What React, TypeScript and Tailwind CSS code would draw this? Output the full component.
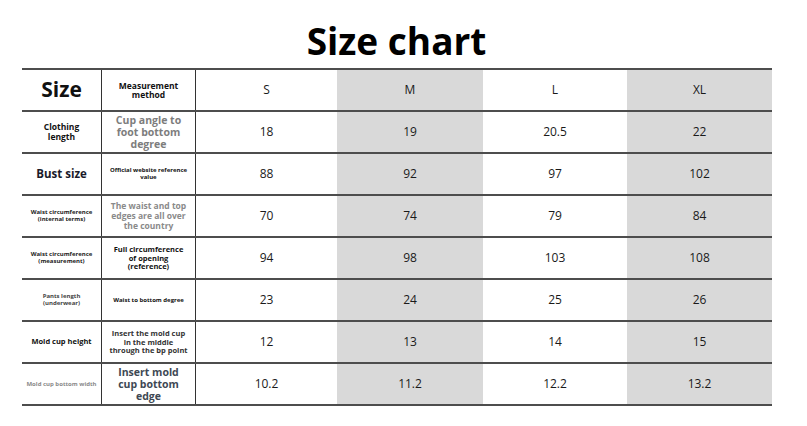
const sizes = ["S", "M", "L", "XL"];

type Row = {
  label: React.ReactNode;
  method: React.ReactNode;
  values: string[];
};

const rows: Row[] = [
  {
    label: <span className="text-[8.5px] font-bold leading-[10.5px] text-[#111]">Clothing<br />length</span>,
    method: (
      <span className="text-[10.5px] font-bold leading-[12px] text-[#7d7d7d]">
        Cup angle to<br />foot bottom<br />degree
      </span>
    ),
    values: ["18", "19", "20.5", "22"],
  },
  {
    label: <span className="text-[11.5px] font-bold text-[#1a1a2a]">Bust size</span>,
    method: (
      <span className="text-[6px] font-bold leading-[7px] text-[#111]">
        Official website reference<br />value
      </span>
    ),
    values: ["88", "92", "97", "102"],
  },
  {
    label: (
      <span className="text-[6px] font-bold leading-[7px] text-[#222]">
        Waist circumference<br />(internal terms)
      </span>
    ),
    method: (
      <span className="text-[8.5px] font-bold leading-[10px] text-[#8a8a8a]">
        The waist and top<br />edges are all over<br />the country
      </span>
    ),
    values: ["70", "74", "79", "84"],
  },
  {
    label: (
      <span className="text-[6px] font-bold leading-[7px] text-[#222]">
        Waist circumference<br />(measurement)
      </span>
    ),
    method: (
      <span className="text-[7.5px] font-bold leading-[8.5px] text-[#111]">
        Full circumference<br />of opening<br />(reference)
      </span>
    ),
    values: ["94", "98", "103", "108"],
  },
  {
    label: (
      <span className="text-[6px] font-bold leading-[7px] text-[#444]">
        Pants length<br />(underwear)
      </span>
    ),
    method: <span className="text-[6px] font-bold text-[#111]">Waist to bottom degree</span>,
    values: ["23", "24", "25", "26"],
  },
  {
    label: <span className="text-[7.5px] font-bold text-[#111]">Mold cup height</span>,
    method: (
      <span className="text-[7.5px] font-bold leading-[8.5px] text-[#333]">
        Insert the mold cup<br />in the middle<br />through the bp point
      </span>
    ),
    values: ["12", "13", "14", "15"],
  },
  {
    label: <span className="text-[6px] font-bold text-[#8a8a8a]">Mold cup bottom width</span>,
    method: (
      <span className="text-[10.5px] font-bold leading-[12px] text-[#3e4854]">
        Insert mold<br />cup bottom<br />edge
      </span>
    ),
    values: ["10.2", "11.2", "12.2", "13.2"],
  },
];

const valueCols = ["bg-white", "bg-[#d9d9d9]", "bg-white", "bg-[#d9d9d9]"];

function TableRow({ label, method, values }: Row) {
  return (
    <div className="grid h-[42px] grid-cols-[80px_94px_141px_146px_144px_145px] border-b-2 border-[#4d4d4d]">
      <div className="flex items-center justify-center border-r-[1.5px] border-[#333] text-center">{label}</div>
      <div className="flex items-center justify-center border-r-[1.5px] border-[#333] text-center">{method}</div>
      {values.map((v, i) => (
        <div key={i} className={`flex items-center justify-center text-[12px] text-[#1a1a1a] ${valueCols[i]}`}>
          {v}
        </div>
      ))}
    </div>
  );
}

export default function App() {
  return (
    <div
      className="h-[426px] w-[807px] bg-white"
      style={{ fontFamily: '"Open Sans", "Noto Sans", sans-serif' }}
    >
      <h1 className="pr-[14px] pt-[15px] text-center text-[37px] font-bold leading-[52px] text-black">Size chart</h1>
      <div className="ml-[22px] mt-[1px] w-[750px] border-t-2 border-[#4d4d4d]">
        <div className="grid h-[42px] grid-cols-[80px_94px_141px_146px_144px_145px] border-b-2 border-[#4d4d4d]">
          <div className="flex items-center justify-center border-r-[1.5px] border-[#333] text-[21px] font-bold text-[#111]">
            Size
          </div>
          <div className="flex items-center justify-center border-r-[1.5px] border-[#333] text-center text-[8.5px] font-bold leading-[9px] text-[#111]">
            Measurement<br />method
          </div>
          {sizes.map((s, i) => (
            <div key={s} className={`flex items-center justify-center text-[12px] text-[#1a1a1a] ${valueCols[i]}`}>
              {s}
            </div>
          ))}
        </div>
        {rows.map((r, i) => (
          <TableRow key={i} {...r} />
        ))}
      </div>
    </div>
  );
}
